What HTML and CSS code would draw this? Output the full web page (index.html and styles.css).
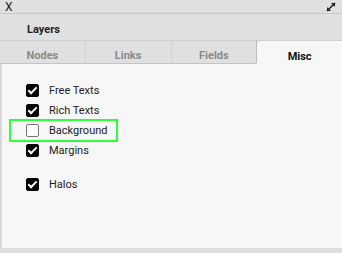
FILE: index.html
```html
<!DOCTYPE html>
<html lang="en">

<head>
    <meta charset="UTF-8">
    <meta name="viewport" content="width=device-width, initial-scale=1.0">
    <title>Layers</title>
    <link rel="stylesheet" href="styles.css">
</head>

<body>
    <div class="panel">
        <div class="titlebar">
            <span class="close">X</span>
            <svg class="expand" width="10" height="10" viewBox="0 0 10 10">
                <path d="M1 9 L9 1" stroke="#222" stroke-width="1.6" />
                <path d="M5 1 L9 1 L9 5 Z" fill="#222" />
                <path d="M1 5 L1 9 L5 9 Z" fill="#222" />
            </svg>
        </div>
        <div class="header">Layers</div>
        <ul class="tabs">
            <li>Nodes</li>
            <li>Links</li>
            <li>Fields</li>
            <li class="active">Misc</li>
        </ul>
        <div class="content">
            <label class="row"><span class="box checked"></span>Free Texts</label>
            <label class="row"><span class="box checked"></span>Rich Texts</label>
            <label class="row highlight"><span class="box"></span>Background</label>
            <label class="row"><span class="box checked"></span>Margins</label>
            <label class="row gap"><span class="box checked"></span>Halos</label>
        </div>
        <div class="footer"></div>
    </div>
</body>

</html>
```
FILE: styles.css
```css
* {
    margin: 0;
    padding: 0;
    list-style: none;
    box-sizing: border-box;
}

body {
    font-family: Roboto, "Liberation Sans", sans-serif;
    background-color: #f7f7f7;
}

.panel {
    width: 342px;
    height: 253px;
    display: flex;
    flex-direction: column;
}

.titlebar {
    height: 14px;
    background-color: #e0e0e0;
    border-bottom: 1px solid #c8c8c8;
    display: flex;
    justify-content: space-between;
    align-items: center;
    padding: 1px 6px 0 5px;
}

.close {
    font-size: 12px;
    line-height: 12px;
    color: #222;
}

.header {
    height: 27px;
    background-color: #e0e0e0;
    border-bottom: 1px solid #cfcfcf;
    font-size: 11px;
    font-weight: bold;
    color: #222;
    padding: 5px 0 0 27px;
    display: flex;
    align-items: center;
}

.tabs {
    display: flex;
    height: 23px;
    background-color: #e0e0e0;
}

.tabs li {
    flex: 1;
    display: flex;
    justify-content: center;
    align-items: center;
    font-size: 11px;
    font-weight: bold;
    color: #8a8a8a;
    border-right: 1px solid #d2d2d2;
    border-bottom: 1px solid #c4c4c4;
    padding-top: 6px;
}

.tabs li:nth-child(3) {
    border-right: 1px solid #bdbdbd;
    border-bottom-right-radius: 3px;
}

.tabs li.active {
    background-color: #f7f7f7;
    color: #111;
    border: 0;
    border-top-left-radius: 4px;
    padding-top: 8px;
}

.content {
    flex: 1;
    background-color: #f7f7f7;
    border-left: 2px solid #d8d8d8;
    padding: 16px 0 0 7px;
    display: flex;
    flex-direction: column;
}

.row {
    display: flex;
    align-items: center;
    height: 20px;
    width: 109px;
    padding-left: 15px;
    font-size: 11px;
    color: #222;
    border: 2px solid transparent;
}

.row.highlight {
    border-color: #2eff3c;
    height: 23px;
    margin: -1px 0 -2px 0;
}

.row.gap {
    margin-top: 14px;
}

.box {
    width: 13px;
    height: 13px;
    border-radius: 2px;
    margin-right: 10px;
    border: 1px solid #777;
    background-color: #fff;
    position: relative;
}

.box.checked {
    background-color: #000;
    border-color: #000;
}

.box.checked::after {
    content: "";
    position: absolute;
    left: 3px;
    top: 0px;
    width: 3px;
    height: 7px;
    border: solid #fff;
    border-width: 0 2px 2px 0;
    transform: rotate(45deg);
}

.footer {
    height: 5px;
    background-color: #dedede;
}
```
